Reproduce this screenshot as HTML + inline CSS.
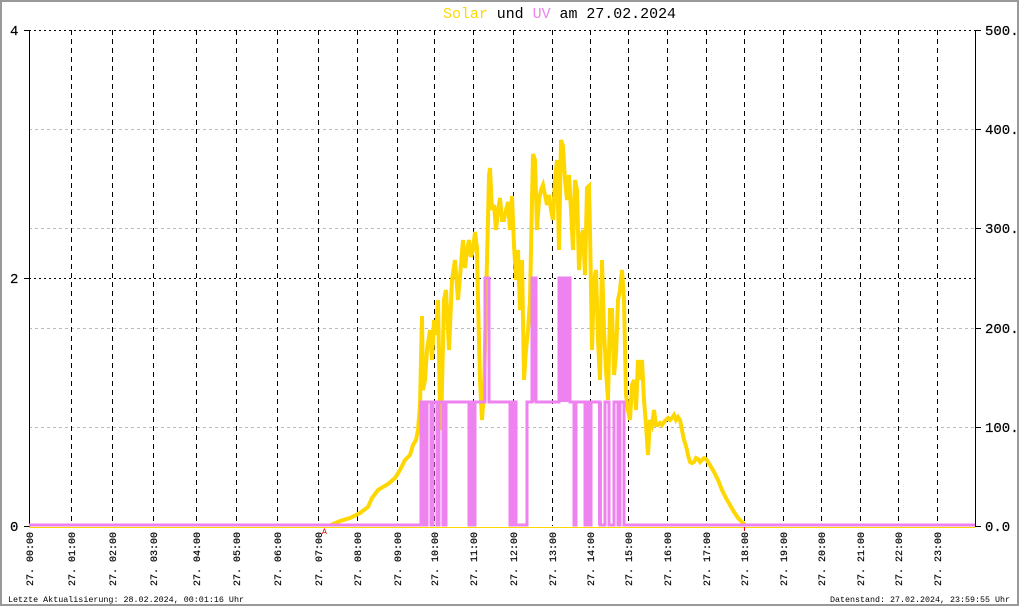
<!DOCTYPE html>
<html><head><meta charset="utf-8"><style>
html,body{margin:0;padding:0;background:#fff;}
svg{display:block;}
text{font-family:"Liberation Mono",monospace;}
</style></head><body>
<svg width="1020" height="606" viewBox="0 0 1020 606" xmlns="http://www.w3.org/2000/svg">
<rect x="0" y="0" width="1020" height="606" fill="#fff"/>
<rect x="1" y="1" width="1017" height="604" fill="none" stroke="#999" stroke-width="2"/>
<text x="443" y="18" font-size="15" textLength="233" lengthAdjust="spacingAndGlyphs"><tspan fill="#ffd700">Solar</tspan> und <tspan fill="#ee82ee">UV</tspan> am 27.02.2024</text>
<g stroke="#bbb" stroke-dasharray="3,3" stroke-width="1">
<line x1="29" y1="129.5" x2="975" y2="129.5"/>
<line x1="29" y1="228.5" x2="975" y2="228.5"/>
<line x1="29" y1="328.5" x2="975" y2="328.5"/>
<line x1="29" y1="427.5" x2="975" y2="427.5"/>
</g>
<g stroke="#000" stroke-dasharray="2,3" stroke-width="1">
<line x1="29" y1="30.5" x2="975" y2="30.5"/>
<line x1="29" y1="278.5" x2="975" y2="278.5"/>
</g>
<g stroke="#000" stroke-dasharray="5,4" stroke-width="1">
<line x1="71.5" y1="30" x2="71.5" y2="526"/>
<line x1="112.5" y1="30" x2="112.5" y2="526"/>
<line x1="153.5" y1="30" x2="153.5" y2="526"/>
<line x1="196.5" y1="30" x2="196.5" y2="526"/>
<line x1="236.5" y1="30" x2="236.5" y2="526"/>
<line x1="277.5" y1="30" x2="277.5" y2="526"/>
<line x1="318.5" y1="30" x2="318.5" y2="526"/>
<line x1="357.5" y1="30" x2="357.5" y2="526"/>
<line x1="397.5" y1="30" x2="397.5" y2="526"/>
<line x1="434.5" y1="30" x2="434.5" y2="526"/>
<line x1="473.5" y1="30" x2="473.5" y2="526"/>
<line x1="513.5" y1="30" x2="513.5" y2="526"/>
<line x1="552.5" y1="30" x2="552.5" y2="526"/>
<line x1="590.5" y1="30" x2="590.5" y2="526"/>
<line x1="628.5" y1="30" x2="628.5" y2="526"/>
<line x1="667.5" y1="30" x2="667.5" y2="526"/>
<line x1="706.5" y1="30" x2="706.5" y2="526"/>
<line x1="744.5" y1="30" x2="744.5" y2="526"/>
<line x1="783.5" y1="30" x2="783.5" y2="526"/>
<line x1="821.5" y1="30" x2="821.5" y2="526"/>
<line x1="860.5" y1="30" x2="860.5" y2="526"/>
<line x1="898.5" y1="30" x2="898.5" y2="526"/>
<line x1="937.5" y1="30" x2="937.5" y2="526"/>
</g>
<g stroke="#000" stroke-width="1">
<line x1="29.5" y1="30" x2="29.5" y2="527"/>
<line x1="975.5" y1="30" x2="975.5" y2="527"/>
<line x1="24" y1="30.5" x2="29" y2="30.5"/>
<line x1="24" y1="278.5" x2="29" y2="278.5"/>
<line x1="24" y1="526.5" x2="29" y2="526.5"/>
<line x1="975" y1="30.5" x2="981" y2="30.5"/>
<line x1="975" y1="129.5" x2="981" y2="129.5"/>
<line x1="975" y1="228.5" x2="981" y2="228.5"/>
<line x1="975" y1="328.5" x2="981" y2="328.5"/>
<line x1="975" y1="427.5" x2="981" y2="427.5"/>
<line x1="975" y1="526.5" x2="981" y2="526.5"/>
</g>
<g font-size="14" fill="#000" stroke="#000" stroke-width="0.2">
<text x="10" y="35">4</text>
<text x="10" y="283">2</text>
<text x="10" y="531">0</text>
</g>
<svg x="0" y="0" width="1018" height="606">
<g font-size="14" fill="#000" stroke="#000" stroke-width="0.2">
<text x="985" y="35">500.0</text>
<text x="985" y="134">400.0</text>
<text x="985" y="233">300.0</text>
<text x="985" y="333">200.0</text>
<text x="985" y="432">100.0</text>
<text x="985" y="531">0.0</text>
</g>
</svg>
<polyline fill="none" stroke="#ffd700" stroke-width="4" stroke-linejoin="miter" points="331,525 340,521 350,518 360,513 368,507 372,498 378,490 388,484 395,478 400,470 405,460 410,455 413,445 416,440 418,430 420,405 421,360 422,316 423,390 425,380 427,350 430,330 432,360 434,320 436,335 438,300 440,410 441,430 444,300 446,290 449,350 452,280 455,260 458,300 461,265 463,240 465,268 467,250 469,240 471,257 473,250 475,232 477,248 478,300 480,380 482,420 484,390 486,300 488,220 489,175 490,168 492,210 494,205 496,230 498,210 500,198 502,220 504,220 506,210 508,202 510,230 512,196 514,245 516,280 518,250 520,310 522,260 524,380 526,350 528,330 530,300 532,200 533,154 535,160 537,230 539,200 541,190 543,185 545,195 547,205 549,195 551,210 553,220 555,180 557,160 559,250 561,140 563,146 565,180 567,200 569,175 571,210 573,250 575,180 577,190 579,270 581,240 583,230 585,275 587,188 589,186 590,230 592,350 594,280 596,270 598,340 600,380 602,260 604,330 606,370 608,400 610,310 612,310 614,375 616,355 618,300 620,290 622,270 624,300 626,395 628,410 630,420 632,385 634,380 636,410 638,360 640,380 642,360 644,400 646,425 648,455 650,420 652,425 654,410 656,425 658,425 660,423 662,425 664,422 666,420 668,418 670,420 672,418 674,415 676,420 678,417 680,420 682,430 684,440 686,446 688,455 690,462 692,463 694,462 696,458 698,459 700,462 702,460 704,458 706,459 708,462 710,465 714,472 718,480 722,490 726,498 730,505 734,512 738,518 742,522 745,525"/>
<line x1="29" y1="527.5" x2="975" y2="527.5" stroke="#ffd700" stroke-width="1"/>
<path fill="none" stroke="#ee82ee" stroke-width="3" d="M29,525 H421 V402 H424 V525 H427 V402 H431 V525 H433 V402 H437 V525 H439 V402 H443 V525 H446 V402 H469 V525 H471 V402 H473 V525 H475 V402 H485 V278 H489 V402 H510 V525 H513 V402 H516 V525 H517 V525 H527 V402 H532 V278 H536 V402 H559 V278 H570 V402 H574 V525 H576 V402 H585 V525 H588 V402 H589 V525 H591 V402 H600 V525 H603 V525 H605 V402 H609 V525 H612 V525 H614 V402 H618 V525 H620 V402 H624 V525 H975"/>
<g fill="#ee82ee">
<rect x="559" y="278" width="11" height="124"/>
<rect x="509" y="402" width="5" height="123"/>
<rect x="585" y="402" width="7" height="123"/>
<rect x="598" y="402" width="4" height="123"/>
<rect x="533" y="278" width="3" height="124"/>
</g>
<text x="322" y="534" font-size="8" fill="#d00">A</text>
<line x1="744.5" y1="527" x2="744.5" y2="531" stroke="#d00"/>
<g font-size="10" fill="#000" stroke="#000" stroke-width="0.2">
<text transform="translate(33,586) rotate(-90)" textLength="54" lengthAdjust="spacingAndGlyphs">27. 00:00</text>
<text transform="translate(75,586) rotate(-90)" textLength="54" lengthAdjust="spacingAndGlyphs">27. 01:00</text>
<text transform="translate(116,586) rotate(-90)" textLength="54" lengthAdjust="spacingAndGlyphs">27. 02:00</text>
<text transform="translate(157,586) rotate(-90)" textLength="54" lengthAdjust="spacingAndGlyphs">27. 03:00</text>
<text transform="translate(200,586) rotate(-90)" textLength="54" lengthAdjust="spacingAndGlyphs">27. 04:00</text>
<text transform="translate(240,586) rotate(-90)" textLength="54" lengthAdjust="spacingAndGlyphs">27. 05:00</text>
<text transform="translate(281,586) rotate(-90)" textLength="54" lengthAdjust="spacingAndGlyphs">27. 06:00</text>
<text transform="translate(322,586) rotate(-90)" textLength="54" lengthAdjust="spacingAndGlyphs">27. 07:00</text>
<text transform="translate(361,586) rotate(-90)" textLength="54" lengthAdjust="spacingAndGlyphs">27. 08:00</text>
<text transform="translate(401,586) rotate(-90)" textLength="54" lengthAdjust="spacingAndGlyphs">27. 09:00</text>
<text transform="translate(438,586) rotate(-90)" textLength="54" lengthAdjust="spacingAndGlyphs">27. 10:00</text>
<text transform="translate(477,586) rotate(-90)" textLength="54" lengthAdjust="spacingAndGlyphs">27. 11:00</text>
<text transform="translate(517,586) rotate(-90)" textLength="54" lengthAdjust="spacingAndGlyphs">27. 12:00</text>
<text transform="translate(556,586) rotate(-90)" textLength="54" lengthAdjust="spacingAndGlyphs">27. 13:00</text>
<text transform="translate(594,586) rotate(-90)" textLength="54" lengthAdjust="spacingAndGlyphs">27. 14:00</text>
<text transform="translate(632,586) rotate(-90)" textLength="54" lengthAdjust="spacingAndGlyphs">27. 15:00</text>
<text transform="translate(671,586) rotate(-90)" textLength="54" lengthAdjust="spacingAndGlyphs">27. 16:00</text>
<text transform="translate(710,586) rotate(-90)" textLength="54" lengthAdjust="spacingAndGlyphs">27. 17:00</text>
<text transform="translate(748,586) rotate(-90)" textLength="54" lengthAdjust="spacingAndGlyphs">27. 18:00</text>
<text transform="translate(787,586) rotate(-90)" textLength="54" lengthAdjust="spacingAndGlyphs">27. 19:00</text>
<text transform="translate(825,586) rotate(-90)" textLength="54" lengthAdjust="spacingAndGlyphs">27. 20:00</text>
<text transform="translate(864,586) rotate(-90)" textLength="54" lengthAdjust="spacingAndGlyphs">27. 21:00</text>
<text transform="translate(902,586) rotate(-90)" textLength="54" lengthAdjust="spacingAndGlyphs">27. 22:00</text>
<text transform="translate(941,586) rotate(-90)" textLength="54" lengthAdjust="spacingAndGlyphs">27. 23:00</text>
</g>
<g font-size="8.5" fill="#000">
<text x="8" y="602" textLength="236" lengthAdjust="spacingAndGlyphs">Letzte Aktualisierung: 28.02.2024, 00:01:16 Uhr</text>
<text x="830" y="602" textLength="180" lengthAdjust="spacingAndGlyphs">Datenstand: 27.02.2024, 23:59:55 Uhr</text>
</g>
</svg>
</body></html>
